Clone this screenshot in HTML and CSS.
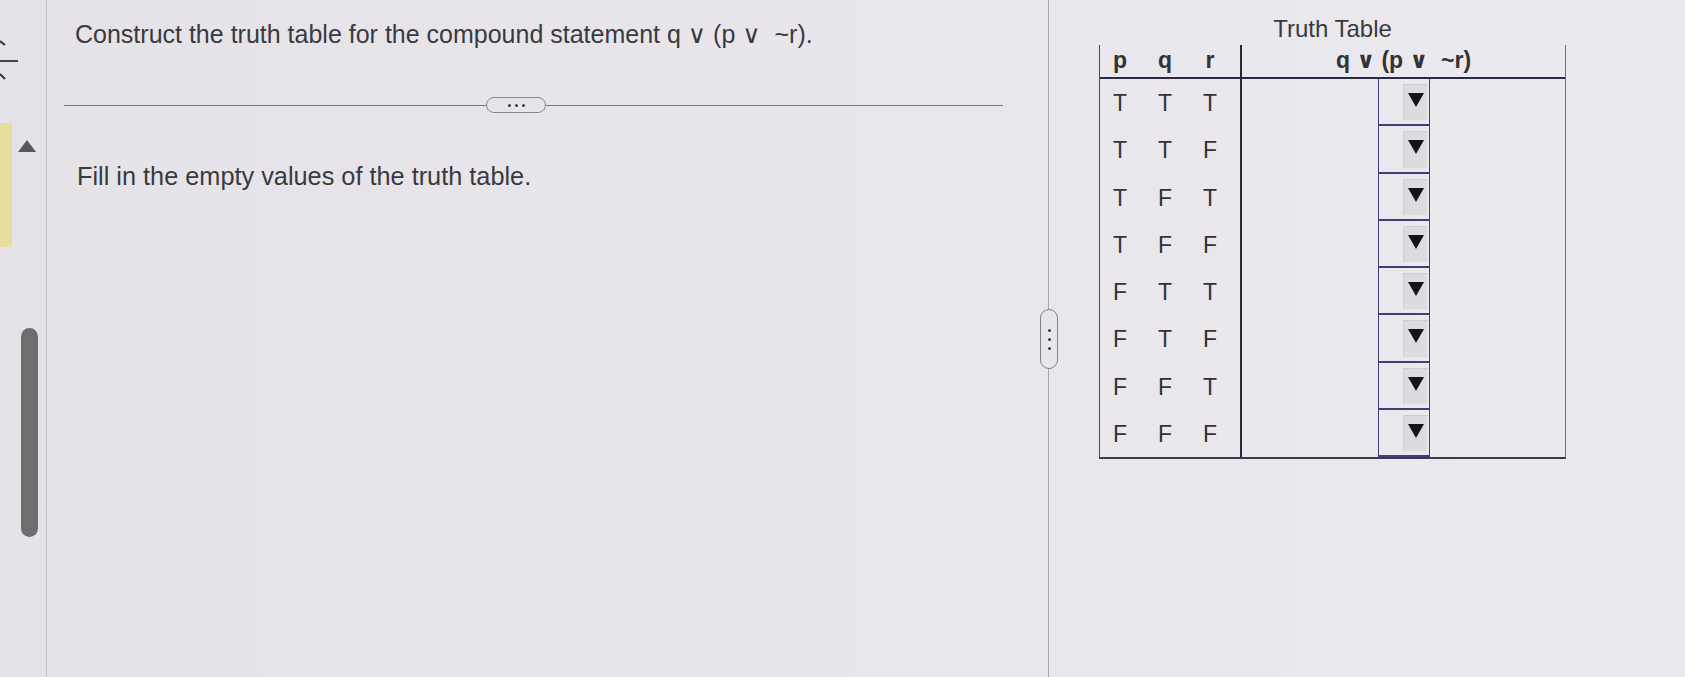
FILE: index.html
```html
<!DOCTYPE html>
<html lang="en">
<head>
<meta charset="utf-8">
<title>Truth Table</title>
<link rel="stylesheet" href="styles.css">
</head>
<body>
<div class="screen">
  <aside class="rail">
    <div class="rail-icon">
      <svg width="18" height="40" viewBox="0 0 18 40">
        <path d="M0 1 L5 5" stroke="#3a3a3e" stroke-width="2.2" fill="none"/>
        <rect x="0" y="20" width="18" height="2" fill="#45454a"/>
        <path d="M0 34 L5 39" stroke="#3a3a3e" stroke-width="2.2" fill="none"/>
      </svg>
    </div>
    <div class="rail-flag">
      <span class="flag-bar"></span>
      <span class="flag-arrow"></span>
    </div>
    <div class="rail-thumb"></div>
  </aside>

  <section class="question">
    <h1 class="prompt">Construct the truth table for the compound statement q &#8744; (p &#8744; &nbsp;~r).</h1>
    <div class="sep">
      <span class="sep-line sep-left"></span>
      <span class="sep-pill"><i></i><i></i><i></i></span>
      <span class="sep-line sep-right"></span>
    </div>
    <p class="instr">Fill in the empty values of the truth table.</p>
    <div class="split-handle"><i></i><i></i><i></i></div>
  </section>

  <section class="answer">
    <div class="tt-wrap">
      <div class="tt-caption">Truth Table</div>
      <div class="tt">
        <div class="tt-head">
          <div class="vars"><span>p</span><span>q</span><span>r</span></div>
          <div class="expr">q &#8744; (p &#8744; &nbsp;~r)</div>
        </div>
        <div class="tt-row"><div class="vars"><span>T</span><span>T</span><span>T</span></div><div class="expr"><div class="sel"><span class="sel-btn"><span class="tri"></span></span></div></div></div>
        <div class="tt-row"><div class="vars"><span>T</span><span>T</span><span>F</span></div><div class="expr"><div class="sel"><span class="sel-btn"><span class="tri"></span></span></div></div></div>
        <div class="tt-row"><div class="vars"><span>T</span><span>F</span><span>T</span></div><div class="expr"><div class="sel"><span class="sel-btn"><span class="tri"></span></span></div></div></div>
        <div class="tt-row"><div class="vars"><span>T</span><span>F</span><span>F</span></div><div class="expr"><div class="sel"><span class="sel-btn"><span class="tri"></span></span></div></div></div>
        <div class="tt-row"><div class="vars"><span>F</span><span>T</span><span>T</span></div><div class="expr"><div class="sel"><span class="sel-btn"><span class="tri"></span></span></div></div></div>
        <div class="tt-row"><div class="vars"><span>F</span><span>T</span><span>F</span></div><div class="expr"><div class="sel"><span class="sel-btn"><span class="tri"></span></span></div></div></div>
        <div class="tt-row"><div class="vars"><span>F</span><span>F</span><span>T</span></div><div class="expr"><div class="sel"><span class="sel-btn"><span class="tri"></span></span></div></div></div>
        <div class="tt-row"><div class="vars"><span>F</span><span>F</span><span>F</span></div><div class="expr"><div class="sel"><span class="sel-btn"><span class="tri"></span></span></div></div></div>
      </div>
    </div>
  </section>
</div>
</body>
</html>
```

FILE: styles.css
```css
* { box-sizing: border-box; }

html, body {
  margin: 0;
  padding: 0;
}

body {
  width: 1685px;
  height: 677px;
  overflow: hidden;
  background: linear-gradient(to right, #e5e3e8 0%, #e8e6eb 50%, #ebeaee 100%);
  font-family: "Liberation Sans", Arial, "DejaVu Sans", sans-serif;
  color: #38383c;
}

.screen {
  display: flex;
  height: 677px;
}

/* left rail */
.rail {
  width: 47px;
  flex: 0 0 47px;
  border-right: 1px solid #c6c4ca;
  display: flex;
  flex-direction: column;
}

.rail-icon {
  margin-top: 40px;
  height: 40px;
}
.rail-icon svg { display: block; }

.rail-flag {
  margin-top: 43px;
  height: 124px;
  display: flex;
}

.flag-bar {
  width: 12px;
  height: 124px;
  background: #e6df9c;
}

.flag-arrow {
  margin: 17px 0 0 6px;
  width: 0;
  height: 0;
  border-left: 9px solid transparent;
  border-right: 9px solid transparent;
  border-bottom: 12px solid #58585c;
}

.rail-thumb {
  margin: 81px 0 0 21px;
  width: 17px;
  height: 209px;
  border-radius: 9px;
  background: #6c6f6d;
}

/* question pane */
.question {
  position: relative;
  width: 1002px;
  flex: 0 0 1002px;
  border-right: 1px solid #a9a7ae;
  padding-top: 19px;
}

.prompt {
  margin: 0;
  padding-left: 28px;
  font-size: 25px;
  line-height: 30px;
  font-weight: normal;
  color: #3a3a3e;
}

.sep {
  margin: 48px 0 0 17px;
  width: 939px;
  height: 16px;
  display: flex;
  align-items: center;
}

.sep-line {
  height: 1px;
  background: #77777c;
}
.sep-left { width: 422px; }
.sep-right { flex: 1; }

.sep-pill {
  width: 60px;
  height: 16px;
  border: 1.5px solid #88888d;
  border-radius: 8px;
  display: flex;
  align-items: center;
  justify-content: center;
  gap: 4px;
}
.sep-pill i,
.split-handle i {
  display: block;
  width: 3px;
  height: 3px;
  border-radius: 50%;
  background: #3c3c40;
}

.instr {
  margin: 48px 0 0 0;
  padding-left: 30px;
  font-size: 25.3px;
  line-height: 30px;
  color: #3a3a3e;
}

.split-handle {
  position: absolute;
  top: 309px;
  right: -10px;
  width: 18px;
  height: 60px;
  border: 1.5px solid #808085;
  border-radius: 9px;
  background: #e8e6eb;
  display: flex;
  flex-direction: column;
  align-items: center;
  justify-content: center;
  gap: 6px;
}

/* answer pane */
.answer {
  flex: 1;
  padding-top: 15px;
}

.tt-wrap {
  margin-left: 50px;
  width: 467px;
}

.tt-caption {
  text-align: center;
  font-size: 24px;
  line-height: 28px;
  color: #3a3a3e;
  margin-bottom: 2px;
}

.tt {
  border-left: 1px solid #4a4a58;
  border-right: 1px solid #707076;
  border-bottom: 2px solid #3a3a52;
}

.tt-head {
  display: flex;
  height: 34px;
  border-bottom: 2px solid #2a2a48;
}

.vars {
  width: 142px;
  flex: 0 0 142px;
  border-right: 2px solid #26263c;
  display: grid;
  grid-template-columns: repeat(3, 40px);
  column-gap: 5px;
  align-items: center;
  justify-items: center;
  font-size: 23px;
  color: #333336;
}

.tt-head .vars {
  font-weight: bold;
  font-size: 23px;
  line-height: 26px;
  padding-bottom: 3px;
}

.expr {
  flex: 1;
}

.tt-head .expr {
  text-align: center;
  font-weight: bold;
  font-size: 23px;
  line-height: 26px;
  padding-top: 2px;
  color: #333336;
}

.tt-row {
  display: flex;
  height: 47.25px;
}

.tt-row .vars span { padding-top: 2px; }

.tt-row .expr {
  display: flex;
  justify-content: center;
}

.sel {
  width: 52px;
  margin-left: 1px;
  border-left: 1px solid #3d417a;
  border-right: 1px solid #3d417a;
  border-bottom: 2px solid #3d417a;
  display: flex;
  justify-content: flex-end;
}

.sel-btn {
  width: 25px;
  margin: 5px 1px 3px 0;
  background: #dcdbe0;
  border: 1px solid #cfced4;
  border-right-color: #e8e7ec;
  border-bottom-color: #e8e7ec;
  display: flex;
  justify-content: center;
}

.tri {
  margin-top: 8px;
  width: 0;
  height: 0;
  border-left: 8px solid transparent;
  border-right: 8px solid transparent;
  border-top: 14px solid #151517;
}
```
